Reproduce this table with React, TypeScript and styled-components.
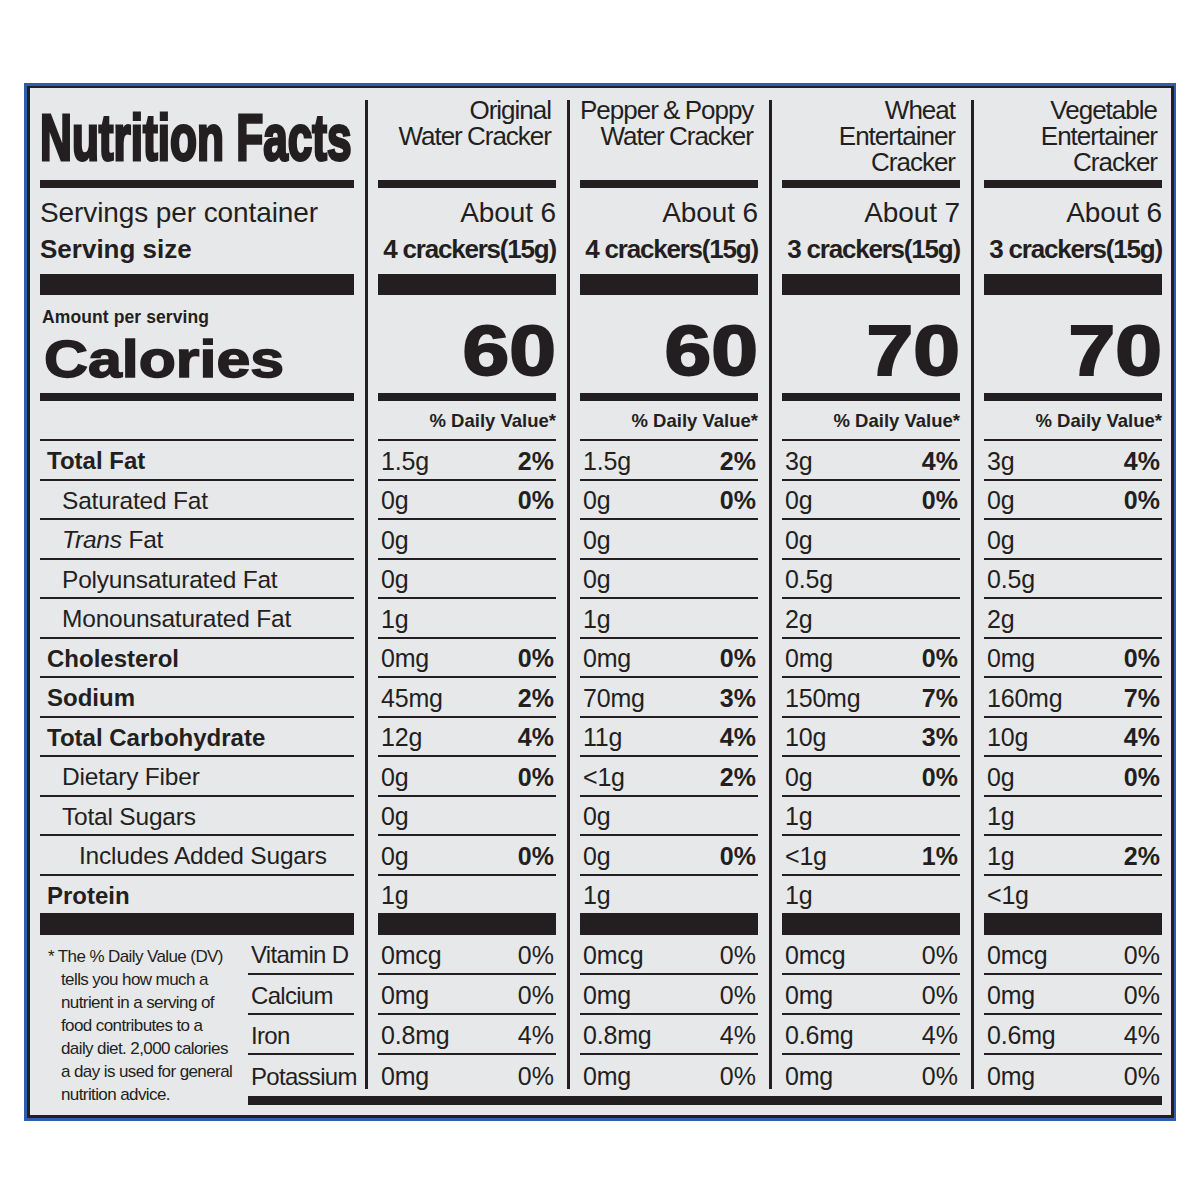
import React from "react";
import styled, { createGlobalStyle } from "styled-components";

const INK = "#231f20";

const GlobalStyle = createGlobalStyle`
  body {
    margin: 0;
    background: #ffffff;
  }
  * {
    box-sizing: border-box;
  }
`;

type Cell = [string, string?];

interface Product {
  name: string[];
  servings: string;
  size: string;
  calories: string;
  nutrients: Cell[];
  vitamins: Cell[];
}

const products: Product[] = [
  {
    name: ["Original", "Water Cracker"],
    servings: "About 6",
    size: "4 crackers(15g)",
    calories: "60",
    nutrients: [["1.5g", "2%"], ["0g", "0%"], ["0g"], ["0g"], ["1g"], ["0mg", "0%"], ["45mg", "2%"], ["12g", "4%"], ["0g", "0%"], ["0g"], ["0g", "0%"], ["1g"]],
    vitamins: [["0mcg", "0%"], ["0mg", "0%"], ["0.8mg", "4%"], ["0mg", "0%"]],
  },
  {
    name: ["Pepper & Poppy", "Water Cracker"],
    servings: "About 6",
    size: "4 crackers(15g)",
    calories: "60",
    nutrients: [["1.5g", "2%"], ["0g", "0%"], ["0g"], ["0g"], ["1g"], ["0mg", "0%"], ["70mg", "3%"], ["11g", "4%"], ["<1g", "2%"], ["0g"], ["0g", "0%"], ["1g"]],
    vitamins: [["0mcg", "0%"], ["0mg", "0%"], ["0.8mg", "4%"], ["0mg", "0%"]],
  },
  {
    name: ["Wheat", "Entertainer", "Cracker"],
    servings: "About 7",
    size: "3 crackers(15g)",
    calories: "70",
    nutrients: [["3g", "4%"], ["0g", "0%"], ["0g"], ["0.5g"], ["2g"], ["0mg", "0%"], ["150mg", "7%"], ["10g", "3%"], ["0g", "0%"], ["1g"], ["<1g", "1%"], ["1g"]],
    vitamins: [["0mcg", "0%"], ["0mg", "0%"], ["0.6mg", "4%"], ["0mg", "0%"]],
  },
  {
    name: ["Vegetable", "Entertainer", "Cracker"],
    servings: "About 6",
    size: "3 crackers(15g)",
    calories: "70",
    nutrients: [["3g", "4%"], ["0g", "0%"], ["0g"], ["0.5g"], ["2g"], ["0mg", "0%"], ["160mg", "7%"], ["10g", "4%"], ["0g", "0%"], ["1g"], ["1g", "2%"], ["<1g"]],
    vitamins: [["0mcg", "0%"], ["0mg", "0%"], ["0.6mg", "4%"], ["0mg", "0%"]],
  },
];

const nutrients = [
  { label: "Total Fat", bold: true, level: 0 },
  { label: "Saturated Fat", level: 1 },
  { label: "Fat", italic: "Trans", level: 1 },
  { label: "Polyunsaturated Fat", level: 1 },
  { label: "Monounsaturated Fat", level: 1 },
  { label: "Cholesterol", bold: true, level: 0 },
  { label: "Sodium", bold: true, level: 0 },
  { label: "Total Carbohydrate", bold: true, level: 0 },
  { label: "Dietary Fiber", level: 1 },
  { label: "Total Sugars", level: 1 },
  { label: "Includes Added Sugars", level: 2 },
  { label: "Protein", bold: true, level: 0 },
];

const vitamins = ["Vitamin D", "Calcium", "Iron", "Potassium"];

// box: blue outer edge, dark inner edge
const Frame = styled.div`
  margin: 83px 0 0 24px;
  width: 1152px;
  border: 3px solid #2b5fa9;
  border-right-width: 2px;
`;

const Panel = styled.div`
  background: #e7e8ea;
  border: 3px solid ${INK};
  border-top-width: 2px;
  padding: 9px 9px 9px 10px;
  color: ${INK};
  font-family: "Liberation Sans", Arial, sans-serif;
`;

const Sheet = styled.div`
  display: grid;
  grid-template-columns: 208px 106px repeat(4, 202px);
`;

const LabelCell = styled.div<{ $wide?: boolean }>`
  grid-column: ${(p) => (p.$wide ? "1 / 3" : "2")};
`;

const ValueCell = styled.div<{ $top?: boolean }>`
  margin: ${(p) => (p.$top ? "3px" : "0")} 0 0 11px;
  padding-left: 10px;
  border-left: 3px solid ${INK};
`;

/* header */
const HeadBox = styled.div<{ $value?: boolean }>`
  height: 91px;
  margin-top: ${(p) => (p.$value ? "-3px" : "0")};
  padding-right: ${(p) => (p.$value ? "5px" : "0")};
  border-bottom: 8px solid ${INK};
  text-align: ${(p) => (p.$value ? "right" : "left")};
`;

const Title = styled.div`
  display: inline-block;
  margin-top: 9px;
  font-size: 64px;
  line-height: 64px;
  font-weight: 700;
  white-space: nowrap;
  -webkit-text-stroke: 3px ${INK};
  transform: scaleX(0.69);
  transform-origin: left top;
`;

const ProductLine = styled.div`
  font-size: 26px;
  line-height: 26px;
  letter-spacing: -1px;
  word-spacing: -1px;
  white-space: nowrap;
`;

/* servings */
const ServeBox = styled.div<{ $right?: boolean }>`
  height: 107px;
  padding: 7px 0;
  border-bottom: 21px solid ${INK};
  text-align: ${(p) => (p.$right ? "right" : "left")};
`;

const Plain = styled.div`
  font-size: 28px;
  line-height: 36px;
  letter-spacing: -0.1px;
  white-space: nowrap;
`;

const Strong = styled.div<{ $tight?: boolean }>`
  font-size: 26px;
  line-height: 36px;
  font-weight: 700;
  letter-spacing: ${(p) => (p.$tight ? "-1.2px" : "0")};
  white-space: nowrap;
`;

/* calories */
const CalBox = styled.div<{ $number?: boolean }>`
  height: 106px;
  border-bottom: 8px solid ${INK};
  padding: ${(p) => (p.$number ? "0 0 7px" : "12px 0 0 2px")};
  display: flex;
  flex-direction: column;
  align-items: ${(p) => (p.$number ? "flex-end" : "flex-start")};
  justify-content: ${(p) => (p.$number ? "flex-end" : "flex-start")};
`;

const Caption = styled.div`
  font-size: 17.5px;
  line-height: 20px;
  font-weight: 700;
  letter-spacing: 0.1px;
`;

const CalWord = styled.div`
  display: inline-block;
  margin: 4px 0 0 2px;
  font-size: 52px;
  line-height: 56px;
  font-weight: 700;
  -webkit-text-stroke: 1.5px ${INK};
  transform: scaleX(1.17);
  transform-origin: left center;
`;

const BigNumber = styled.div`
  display: inline-block;
  font-size: 70px;
  line-height: 70px;
  font-weight: 700;
  -webkit-text-stroke: 2px ${INK};
  transform: scaleX(1.2);
  transform-origin: right center;
`;

/* daily value heading */
const DvBox = styled.div`
  height: 40px;
  padding-top: 9px;
  border-bottom: 2.5px solid ${INK};
  text-align: right;
  font-size: 18.5px;
  line-height: 22px;
  font-weight: 700;
`;

/* nutrient rows */
const RowLine = styled.div<{ $h?: number; $rule?: number; $pt?: number }>`
  height: ${(p) => p.$h ?? 39.5}px;
  border-bottom: ${(p) => p.$rule ?? 2.5}px solid ${INK};
  padding: ${(p) => p.$pt ?? 3}px 2px 0 3px;
  display: flex;
  align-items: center;
  justify-content: space-between;
  white-space: nowrap;
`;

const NutrientName = styled.span<{ $bold?: boolean; $level: number }>`
  margin-left: ${(p) => [4, 19, 36][p.$level]}px;
  font-size: ${(p) => (p.$bold ? 24 : 24.5)}px;
  font-weight: ${(p) => (p.$bold ? 700 : 400)};
  letter-spacing: ${(p) => (p.$bold ? "0" : "-0.2px")};
`;

const VitaminName = styled.span`
  font-size: 24px;
  letter-spacing: -0.7px;
`;

const Amount = styled.span`
  font-size: 25px;
  letter-spacing: -0.2px;
`;

const Percent = styled.span<{ $bold?: boolean }>`
  font-size: 25px;
  font-weight: ${(p) => (p.$bold ? 700 : 400)};
`;

/* bottom */
const Footnote = styled.div`
  grid-column: 1;
  grid-row: span 5;
  padding: 10px 0 0 21px;
  text-indent: -13px;
  font-size: 17px;
  line-height: 23px;
  letter-spacing: -0.6px;
  white-space: nowrap;
`;

const BottomBar = styled.div`
  grid-column: 2 / -1;
  margin-top: 7px;
  height: 9px;
  background: ${INK};
`;

const vitaminRows = [
  { h: 40, rule: 2.5, pt: 3 },
  { h: 39, rule: 2.5, pt: 3 },
  { h: 39, rule: 2.5, pt: 3 },
  { h: 32, rule: 0, pt: 10 },
];

export default function App() {
  return (
    <>
      <GlobalStyle />
      <Frame>
        <Panel>
          <Sheet>
            <LabelCell $wide>
              <HeadBox>
                <Title>Nutrition Facts</Title>
              </HeadBox>
            </LabelCell>
            {products.map((p) => (
              <ValueCell key={p.name.join(" ")} $top>
                <HeadBox $value>
                  {p.name.map((line) => (
                    <ProductLine key={line}>{line}</ProductLine>
                  ))}
                </HeadBox>
              </ValueCell>
            ))}

            <LabelCell $wide>
              <ServeBox>
                <Plain>Servings per container</Plain>
                <Strong>Serving size</Strong>
              </ServeBox>
            </LabelCell>
            {products.map((p) => (
              <ValueCell key={p.name.join(" ")}>
                <ServeBox $right>
                  <Plain>{p.servings}</Plain>
                  <Strong $tight>{p.size}</Strong>
                </ServeBox>
              </ValueCell>
            ))}

            <LabelCell $wide>
              <CalBox>
                <Caption>Amount per serving</Caption>
                <CalWord>Calories</CalWord>
              </CalBox>
            </LabelCell>
            {products.map((p) => (
              <ValueCell key={p.name.join(" ")}>
                <CalBox $number>
                  <BigNumber>{p.calories}</BigNumber>
                </CalBox>
              </ValueCell>
            ))}

            <LabelCell $wide>
              <DvBox />
            </LabelCell>
            {products.map((p) => (
              <ValueCell key={p.name.join(" ")}>
                <DvBox>% Daily Value*</DvBox>
              </ValueCell>
            ))}

            {nutrients.map((n, i) => {
              const last = i === nutrients.length - 1;
              return (
                <React.Fragment key={n.label + i}>
                  <LabelCell $wide>
                    <RowLine $h={last ? 59 : 39.5} $rule={last ? 22 : 2.5}>
                      <NutrientName $bold={n.bold} $level={n.level}>
                        {n.italic && <i>{n.italic} </i>}
                        {n.label}
                      </NutrientName>
                    </RowLine>
                  </LabelCell>
                  {products.map((p) => {
                    const [amount, dv] = p.nutrients[i];
                    return (
                      <ValueCell key={p.name.join(" ")}>
                        <RowLine $h={last ? 59 : 39.5} $rule={last ? 22 : 2.5}>
                          <Amount>{amount}</Amount>
                          {dv && <Percent $bold>{dv}</Percent>}
                        </RowLine>
                      </ValueCell>
                    );
                  })}
                </React.Fragment>
              );
            })}

            <Footnote>
              * The % Daily Value (DV)
              <br />
              tells you how much a
              <br />
              nutrient in a serving of
              <br />
              food contributes to a
              <br />
              daily diet. 2,000 calories
              <br />
              a day is used for general
              <br />
              nutrition advice.
            </Footnote>
            {vitamins.map((v, i) => {
              const row = vitaminRows[i];
              return (
                <React.Fragment key={v}>
                  <LabelCell>
                    <RowLine $h={row.h} $rule={row.rule} $pt={row.pt}>
                      <VitaminName>{v}</VitaminName>
                    </RowLine>
                  </LabelCell>
                  {products.map((p) => {
                    const [amount, dv] = p.vitamins[i];
                    return (
                      <ValueCell key={p.name.join(" ")}>
                        <RowLine $h={row.h} $rule={row.rule} $pt={row.pt}>
                          <Amount>{amount}</Amount>
                          <Percent>{dv}</Percent>
                        </RowLine>
                      </ValueCell>
                    );
                  })}
                </React.Fragment>
              );
            })}
            <BottomBar />
          </Sheet>
        </Panel>
      </Frame>
    </>
  );
}
